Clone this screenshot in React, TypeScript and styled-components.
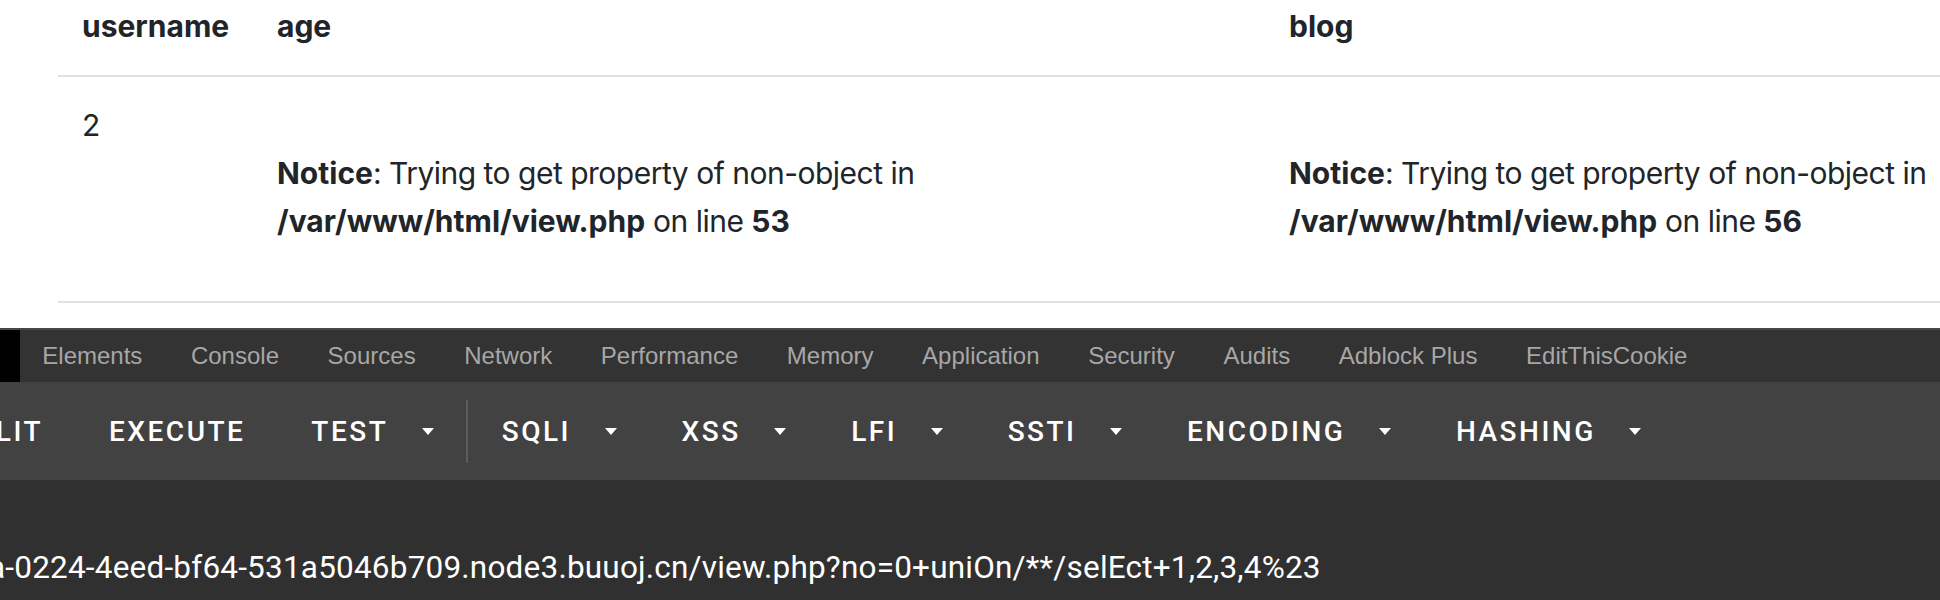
import React from 'react';
import styled, { createGlobalStyle } from 'styled-components';

const GlobalStyle = createGlobalStyle`
  html, body {
    margin: 0;
    padding: 0;
    background: #fff;
  }
  body {
    width: 1940px;
    height: 600px;
    overflow: hidden;
  }
  *, *::before, *::after {
    box-sizing: border-box;
  }
`;

const Screen = styled.div`
  width: 1940px;
  height: 600px;
  display: flex;
  flex-direction: column;
  overflow: hidden;
`;

const PageArea = styled.div`
  flex: 0 0 328px;
  background: #fff;
  padding-left: 58px;
  overflow: hidden;
  font-family: Inter, 'Liberation Sans', sans-serif;
  font-size: 30px;
  line-height: 48px;
  color: #212529;
`;

const Table = styled.table`
  border-collapse: collapse;
  table-layout: fixed;
  width: 2020px;

  b {
    letter-spacing: 0;
  }
`;

// widths are content widths; 24px padding sits on each side
const HeadCell = styled.th<{ $w: number }>`
  width: ${(p) => p.$w + 48}px;
  text-align: left;
  font-weight: 700;
  padding: 2px 24px 25px;
  border-bottom: 2px solid #dee2e6;
  vertical-align: bottom;
`;

const Cell = styled.td`
  padding: 24px 24px 56px;
  vertical-align: top;
  border-bottom: 2px solid #dee2e6;
  white-space: nowrap;
  letter-spacing: -0.5px;
`;

const TabBar = styled.div`
  flex: 0 0 54px;
  background: #333333;
  border-top: 2px solid #474747;
  display: flex;
  align-items: stretch;
`;

const DockMark = styled.div`
  width: 20px;
  margin-right: -2px;
  background: #000;
`;

const Tab = styled.div`
  display: flex;
  align-items: center;
  padding: 0 24.3px;
  font-family: 'Liberation Sans', Arial, sans-serif;
  font-size: 24px;
  color: #a7a7a7;
`;

const HackBar = styled.div`
  flex: 0 0 98px;
  background: #424242;
  display: flex;
  align-items: center;
  overflow: hidden;
`;

const ButtonRow = styled.div`
  display: flex;
  align-items: center;
  margin-left: -77px;
  padding-top: 1px;
`;

const Btn = styled.div<{ $menu?: boolean }>`
  display: flex;
  align-items: center;
  height: 72px;
  padding: 0 ${(p) => (p.$menu ? 32 : 33)}px 0 33px;
  font-family: Roboto, 'Liberation Sans', sans-serif;
  font-weight: 500;
  font-size: 28px;
  letter-spacing: 2.5px;
  text-transform: uppercase;
  color: #fff;
  white-space: nowrap;
`;

const CaretIcon = styled.svg`
  margin-left: 33.5px;
  flex: none;
`;

const Divider = styled.div`
  width: 2px;
  height: 63px;
  margin: 0 0.5px;
  background: #5c5c5c;
`;

const UrlArea = styled.div`
  flex: 1;
  background: #303030;
  padding-top: 69px;
  overflow: hidden;
`;

const UrlText = styled.div`
  font-family: Roboto, 'Liberation Sans', sans-serif;
  font-size: 31.5px;
  line-height: 38px;
  letter-spacing: 0.2px;
  color: #fff;
  white-space: nowrap;
  text-indent: -12px;
`;

const Caret = () => (
  <CaretIcon width="12" height="7" viewBox="0 0 12 7">
    <path d="M0 0H12L6 7Z" fill="#fff" />
  </CaretIcon>
);

const tabs = [
  'Elements',
  'Console',
  'Sources',
  'Network',
  'Performance',
  'Memory',
  'Application',
  'Security',
  'Audits',
  'Adblock Plus',
  'EditThisCookie',
];

const menus = ['SQLI', 'XSS', 'LFI', 'SSTI', 'Encoding', 'Hashing'];

const Notice = ({ line }: { line: number }) => (
  <>
    <br />
    <b>Notice</b>: Trying to get property of non-object in
    <br />
    <b>/var/www/html/view.php</b> on line <b>{line}</b>
  </>
);

const App = (): JSX.Element => (
  <Screen>
    <GlobalStyle />
    <PageArea>
      <Table>
        <thead>
          <tr>
            <HeadCell $w={147}>username</HeadCell>
            <HeadCell $w={964}>age</HeadCell>
            <HeadCell $w={765}>blog</HeadCell>
          </tr>
        </thead>
        <tbody>
          <tr>
            <Cell>2</Cell>
            <Cell>
              <Notice line={53} />
            </Cell>
            <Cell>
              <Notice line={56} />
            </Cell>
          </tr>
        </tbody>
      </Table>
    </PageArea>

    <TabBar>
      <DockMark />
      {tabs.map((t) => (
        <Tab key={t}>{t}</Tab>
      ))}
    </TabBar>

    <HackBar>
      <ButtonRow>
        <Btn>Split</Btn>
        <Btn>Execute</Btn>
        <Btn $menu>
          Test
          <Caret />
        </Btn>
        <Divider />
        {menus.map((b) => (
          <Btn key={b} $menu>
            {b}
            <Caret />
          </Btn>
        ))}
      </ButtonRow>
    </HackBar>

    <UrlArea>
      <UrlText>a-0224-4eed-bf64-531a5046b709.node3.buuoj.cn/view.php?no=0+uniOn/**/selEct+1,2,3,4%23</UrlText>
    </UrlArea>
  </Screen>
);

export default App;
